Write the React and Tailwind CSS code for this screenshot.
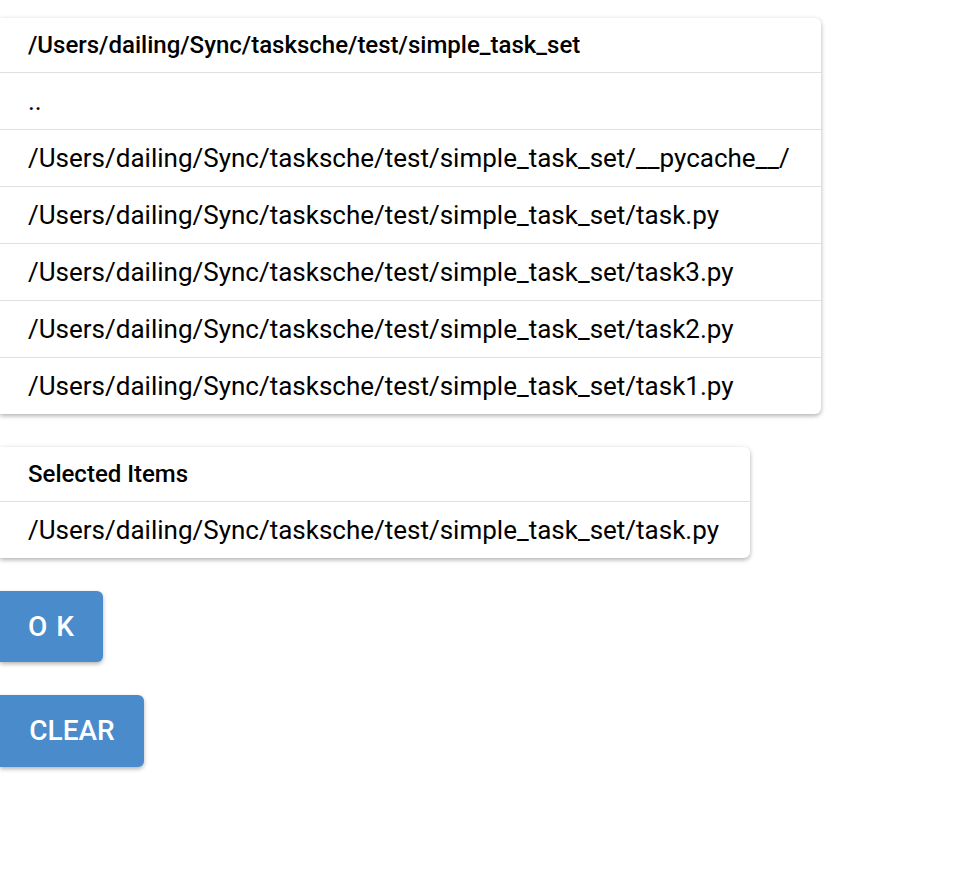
import React from 'react'

const base = '/Users/dailing/Sync/tasksche/test/simple_task_set'

const entries = [
    '..',
    `${base}/__pycache__/`,
    `${base}/task.py`,
    `${base}/task3.py`,
    `${base}/task2.py`,
    `${base}/task1.py`,
]

const Row = ({ children }) => (
    <div className="h-[57px] flex items-center pl-[28px] border-t border-[#e0e0e0] text-[26px] text-black">
        {children}
    </div>
)

const Card = ({ title, items, width }) => (
    <div
        className={`${width} bg-white rounded-r-md shadow-[0_2px_4px_rgba(0,0,0,0.25),0_1px_6px_rgba(0,0,0,0.08)]`}
    >
        <div className="h-[54px] flex items-center pl-[28px] text-[24px] font-medium text-black">
            {title}
        </div>
        {items.map((item, i) => (
            <Row key={i}>{item}</Row>
        ))}
    </div>
)

const Btn = ({ children, className }) => (
    <button
        className={`bg-[#4a8bcc] text-white text-[28px] font-medium rounded-r-md shadow-[0_2px_4px_rgba(0,0,0,0.3)] ${className}`}
    >
        {children}
    </button>
)

export default function App() {
    return (
        <div className="min-h-screen bg-white font-['Roboto',sans-serif] pt-[18px]">
            <Card title={base} items={entries} width="w-[821px]" />
            <div className="mt-[33px]">
                <Card
                    title="Selected Items"
                    items={[`${base}/task.py`]}
                    width="w-[750px]"
                />
            </div>
            <div className="mt-[33px] flex flex-col items-start gap-[33px]">
                <Btn className="w-[103px] h-[71px] tracking-[1px]">O K</Btn>
                <Btn className="w-[144px] h-[72px]">CLEAR</Btn>
            </div>
        </div>
    )
}
